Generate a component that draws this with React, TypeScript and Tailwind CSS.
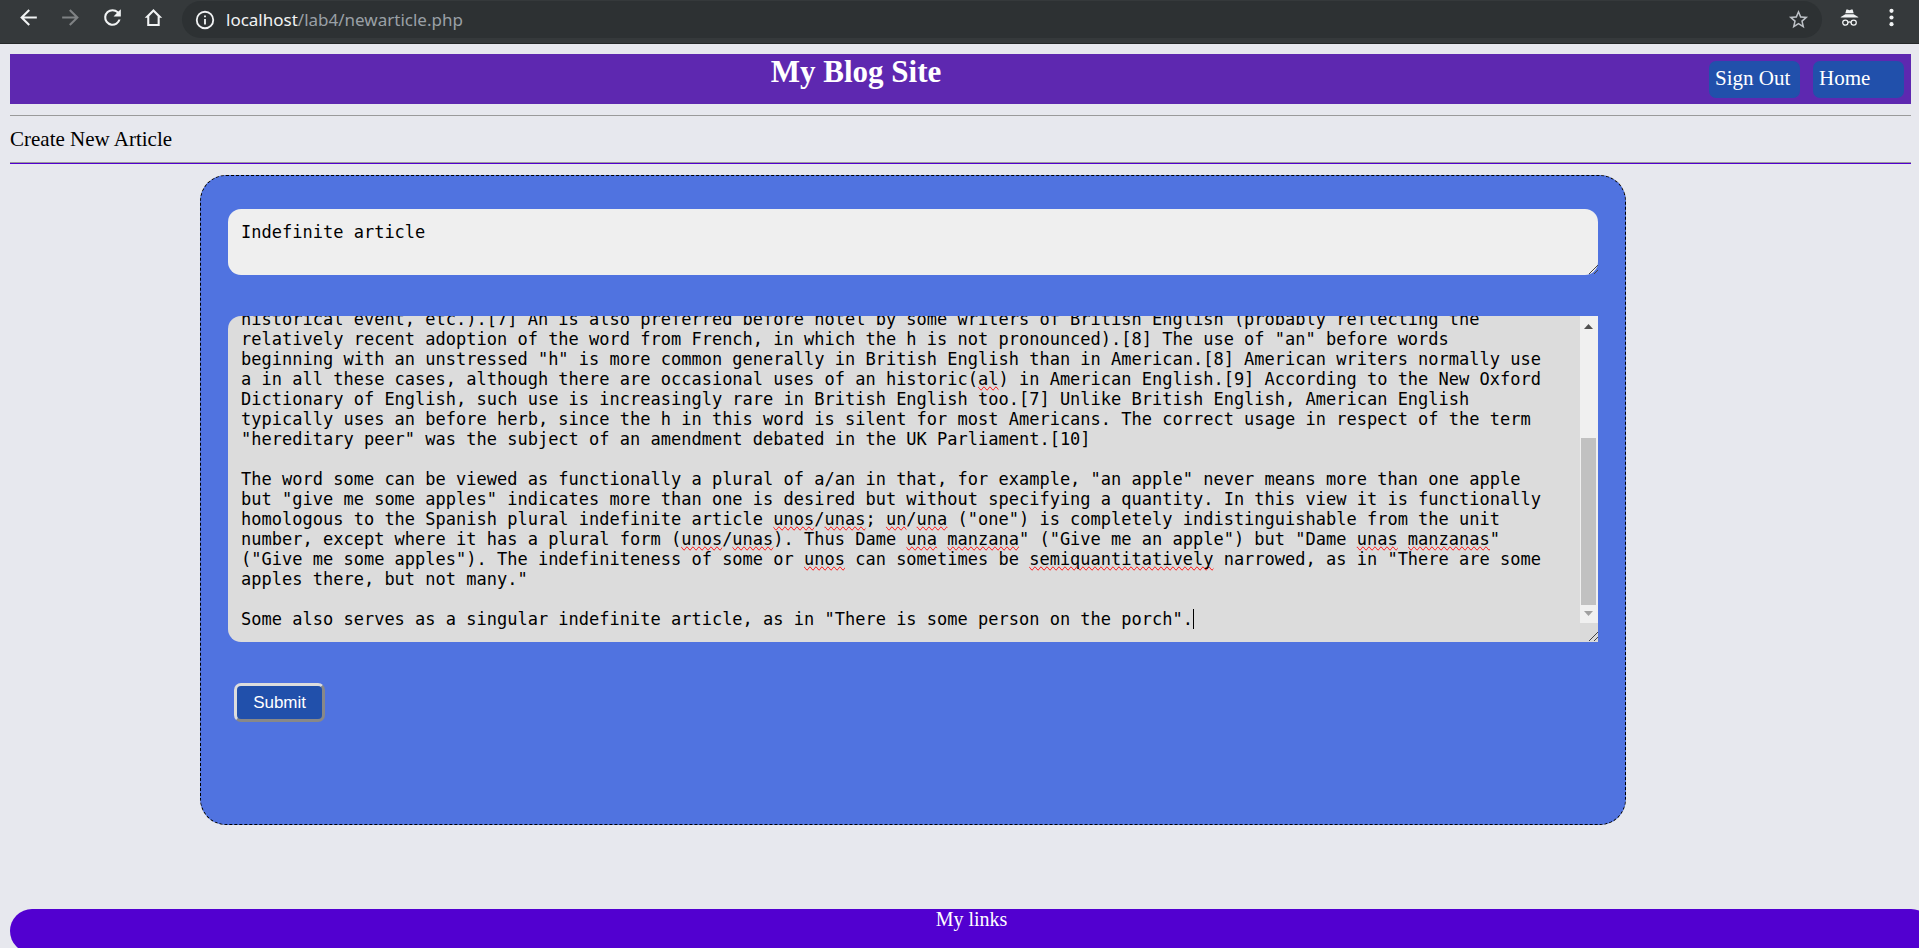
import { useLayoutEffect, useRef } from "react";

const ARTICLE = `historical event, etc.).[7] An is also preferred before hotel by some writers of British English (probably reflecting the
relatively recent adoption of the word from French, in which the h is not pronounced).[8] The use of "an" before words
beginning with an unstressed "h" is more common generally in British English than in American.[8] American writers normally use
a in all these cases, although there are occasional uses of an historic(al) in American English.[9] According to the New Oxford
Dictionary of English, such use is increasingly rare in British English too.[7] Unlike British English, American English
typically uses an before herb, since the h in this word is silent for most Americans. The correct usage in respect of the term
"hereditary peer" was the subject of an amendment debated in the UK Parliament.[10]

The word some can be viewed as functionally a plural of a/an in that, for example, "an apple" never means more than one apple
but "give me some apples" indicates more than one is desired but without specifying a quantity. In this view it is functionally
homologous to the Spanish plural indefinite article unos/unas; un/una ("one") is completely indistinguishable from the unit
number, except where it has a plural form (unos/unas). Thus Dame una manzana" ("Give me an apple") but "Dame unas manzanas"
("Give me some apples"). The indefiniteness of some or unos can sometimes be semiquantitatively narrowed, as in "There are some
apples there, but not many."

Some also serves as a singular indefinite article, as in "There is some person on the porch".`;

const UNKNOWN_WORDS = /\b(al|unos|unas|una|un|manzanas|manzana|semiquantitatively)\b/;

// The editor font is monospaced, so spaces of equal count line up with the words above them.
const blank = (text: string) => text.replace(/[^\n]/g, "\u00a0");

function ToolbarIcon({ label, className, children }: { label: string; className: string; children: React.ReactNode }) {
  return (
    <button type="button" aria-label={label} className={className}>
      <svg viewBox="0 0 24 24" className="size-[25px]" fill="currentColor" aria-hidden="true">
        {children}
      </svg>
    </button>
  );
}

function BrowserBar() {
  return (
    <div className="flex h-11 items-start border-b border-[#252829] bg-[#35393b] pl-4 pr-[15px] text-[#f1f3f4]">
      <div className="flex gap-[17px] pt-[5px]">
        <ToolbarIcon label="Back" className="size-[25px]">
          <path d="M20 11H7.83l5.59-5.59L12 4l-8 8 8 8 1.41-1.41L7.83 13H20v-2z" />
        </ToolbarIcon>
        <ToolbarIcon label="Forward" className="size-[25px] text-[#7f8284]">
          <path d="M12 4l-1.41 1.41L16.17 11H4v2h12.17l-5.58 5.59L12 20l8-8z" />
        </ToolbarIcon>
        <ToolbarIcon label="Reload" className="size-[25px]">
          <path d="M17.65 6.35A7.96 7.96 0 0 0 12 4a8 8 0 1 0 7.73 10h-2.08A6 6 0 1 1 12 6c1.66 0 3.14.69 4.22 1.78L13 11h7V4l-2.35 2.35z" />
        </ToolbarIcon>
        <ToolbarIcon label="Home page" className="size-[25px]">
          <path fillRule="evenodd" d="M11 3.8L2.6 12.2H5V20.2H17V12.2H19.4L11 3.8zM11 6.7L15 10.7V18.2H7V10.700L11 6.7z" />
        </ToolbarIcon>
      </div>
      <div className="ml-[15px] mt-px flex h-[37px] flex-1 items-center rounded-full bg-[#2d3133] px-3">
        <svg viewBox="0 0 24 24" className="size-[22px] shrink-0" fill="currentColor" aria-hidden="true">
          <path d="M11 17h2v-6h-2v6zm0-8h2V7h-2v2zm1-7a10 10 0 1 0 0 20 10 10 0 0 0 0-20zm0 18a8 8 0 1 1 0-16 8 8 0 0 1 0 16z" />
        </svg>
        <div className="ml-[10px] flex-1 whitespace-nowrap font-['Noto_Sans',sans-serif] text-[17px] leading-6">
          localhost<span className="text-[#9aa0a6]">/lab4/newarticle.php</span>
        </div>
        <button type="button" aria-label="Bookmark this page" className="text-[#bdc1c6]">
          <svg viewBox="0 0 24 24" className="size-[23px]" fill="currentColor" aria-hidden="true">
            <path d="M22 9.24l-7.19-.62L12 2 9.19 8.63 2 9.24l5.46 4.73L5.82 21 12 17.27 18.18 21l-1.63-7.03L22 9.24zM12 15.4l-3.76 2.27 1-4.28-3.32-2.88 4.38-.38L12 6.1l1.71 4.04 4.38.38-3.32 2.88 1 4.28L12 15.4z" />
          </svg>
        </button>
      </div>
      <div className="ml-[15px] flex gap-[17px] pt-[5px]">
        <ToolbarIcon label="Incognito" className="size-[25px]">
          <path d="M8 7.9L9 4.2H10.2L12 5L13.8 4.2H15L16 7.900ZM8 8.8H16L20.400 11.4V12.1H3.600V11.4Z" />
          <circle cx="8" cy="16.9" r="2.5" fill="none" stroke="currentColor" strokeWidth="1.2" />
          <circle cx="16" cy="16.9" r="2.5" fill="none" stroke="currentColor" strokeWidth="1.2" />
          <path d="M10.4 16.7Q12 15.6 13.6 16.7" fill="none" stroke="currentColor" strokeWidth="1.2" />
        </ToolbarIcon>
        <ToolbarIcon label="Menu" className="size-[25px]">
          <circle cx="12" cy="5.6" r="2" />
          <circle cx="12" cy="12" r="2" />
          <circle cx="12" cy="18.4" r="2" />
        </ToolbarIcon>
      </div>
    </div>
  );
}

function Grip() {
  return (
    <svg viewBox="0 0 10 10" className="size-[10px]" stroke="#444444" strokeWidth="1" shapeRendering="crispEdges" aria-hidden="true">
      <path d="M1 9L10 0M6 9L10 5" fill="none" />
    </svg>
  );
}

function ArticleEditor() {
  const field = useRef<HTMLTextAreaElement>(null);

  useLayoutEffect(() => {
    if (field.current) field.current.scrollTop = field.current.scrollHeight;
  }, []);

  return (
    <div className="mt-[41px] flex h-[326px] overflow-hidden rounded-l-[13px] bg-[#dcdcdc]">
      <div className="relative min-w-0 flex-1 font-['DejaVu_Sans_Mono',monospace] text-[17px] leading-5">
        <div aria-hidden="true" className="absolute inset-0 flex flex-col justify-end overflow-hidden whitespace-pre p-[13px] text-transparent">
          <div>
            {ARTICLE.split(UNKNOWN_WORDS).map((part, i) =>
              i % 2 === 1 ? (
                <span key={i} className="[text-decoration-line:spelling-error]">
                  {blank(part)}
                </span>
              ) : (
                blank(part)
              ),
            )}
            <span className="inline-block h-5 w-px bg-black align-top" />
          </div>
        </div>
        <textarea
          ref={field}
          aria-label="Article text"
          wrap="off"
          spellCheck={false}
          defaultValue={ARTICLE}
          className="relative block h-full w-full resize-none overflow-auto whitespace-pre bg-transparent p-[13px] text-black outline-none [scrollbar-width:none]"
        />
      </div>
      <div className="flex w-[18px] flex-col bg-[#dadada]" aria-hidden="true">
        <div className="flex h-[307px] flex-col items-center bg-[#f0f0f0] pb-[7px] pt-2">
          <svg viewBox="0 0 9 5" className="h-[5px] w-[9px]" fill="#505050">
            <path d="M4.500 0L9 5H0z" />
          </svg>
          <div className="flex-1" />
          <div className="mb-[6px] h-[167px] w-[15px] bg-[#c1c1c1]" />
          <svg viewBox="0 0 9 5" className="h-[5px] w-[9px]" fill="#a0a0a0">
            <path d="M0 0H9L4.500 5z" />
          </svg>
        </div>
        <div className="flex flex-1 items-end justify-end">
          <Grip />
        </div>
      </div>
    </div>
  );
}

export default function App() {
  return (
    <div className="h-screen overflow-hidden bg-[#e7e8ee] font-['Liberation_Serif',serif] text-[21px] leading-6 text-black">
      <BrowserBar />
      <div className="pl-[10px] pr-2 pt-[10px]">
        <header className="flex h-[50px] bg-[#5e28b0] text-white">
          <h1 className="flex-1 text-center text-[31px] font-bold leading-[35px]">My Blog Site</h1>
          <nav className="flex gap-[13px] p-[7px]">
            <a href="#signout" className="h-[37px] w-[91px] rounded-[7px] bg-[#2150ab] px-[6px] py-[5px]">
              Sign Out
            </a>
            <a href="#home" className="h-[37px] w-[91px] rounded-[7px] bg-[#2150ab] px-[6px] py-[5px]">
              Home
            </a>
          </nav>
        </header>
        <hr className="mt-[11px] border-t border-[#9a9a9a]" />
        <h2 className="mt-[11px]">Create New Article</h2>
        <div className="mt-[11px] h-[2px] border-t border-[#9a9a9a] bg-[#5200d0]" />
        <main className="ml-[10%] mt-[11px] h-[650px] w-3/4 rounded-[26px] border border-dashed border-black bg-[#5073e0] px-[27px] pt-[33px]">
          <form onSubmit={(e) => e.preventDefault()}>
            <div className="relative h-[66px]">
              <textarea
                aria-label="Article title"
                defaultValue="Indefinite article"
                spellCheck={false}
                className="block h-full w-full resize-none rounded-[13px] bg-[#efefef] p-[13px] font-['DejaVu_Sans_Mono',monospace] text-[17px] leading-5 outline-none"
              />
              <div className="absolute bottom-0 right-0">
                <Grip />
              </div>
            </div>
            <ArticleEditor />
            <button
              type="submit"
              className="ml-[6px] mt-[41px] block h-[39px] w-[91px] rounded-[7px] border-3 border-b-[#888888] border-l-[#dddddd] border-r-[#888888] border-t-[#dddddd] bg-[#2150ab] font-['Liberation_Sans',sans-serif] text-[17px] leading-5 text-white"
            >
              Submit
            </button>
          </form>
        </main>
        <footer className="mr-[-22px] mt-[84px] h-11 rounded-[26px] bg-[#5200d0] text-center text-[20px] leading-5 text-white">My links</footer>
      </div>
    </div>
  );
}
